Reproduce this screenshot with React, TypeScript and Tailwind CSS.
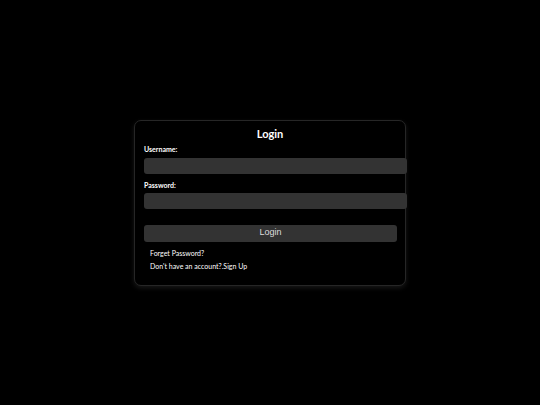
import React from 'react';

const App: React.FC = () => {
  return (
    <div className="w-full h-screen bg-black flex items-center justify-center font-['Lato','Noto_Sans',sans-serif]">
      <div className="w-[272px] h-[166px] box-border rounded-[7px] border border-[#262626] bg-black shadow-[0_2px_5px_rgba(60,60,60,0.4)] pl-[9px] pt-[5px]">
        <h2 className="text-center text-white font-bold text-[11px] leading-[14px] mt-[1px] pr-[9px]">Login</h2>
        <label className="block text-white font-bold text-[7px] leading-[9px] mt-[4px]">Username:</label>
        <div className="w-[263px] h-[16px] bg-[#333333] rounded-[3px] mt-[4px]"></div>
        <label className="block text-white font-bold text-[7px] leading-[9px] mt-[7px]">Password:</label>
        <div className="w-[263px] h-[16px] bg-[#333333] rounded-[3px] mt-[3px]"></div>
        <button className="block w-[253px] h-[17px] bg-[#333333] rounded-[3px] mt-[16px] text-[#dddddd] text-[9px] font-['Liberation_Sans',sans-serif]">
          Login
        </button>
        <p className="text-white text-[7px] leading-[9px] mt-[7px] ml-[6px]">Forget Password?</p>
        <p className="text-white text-[7px] leading-[9px] mt-[4px] ml-[6px]">Don't have an account?.Sign Up</p>
      </div>
    </div>
  );
};

export default App;
